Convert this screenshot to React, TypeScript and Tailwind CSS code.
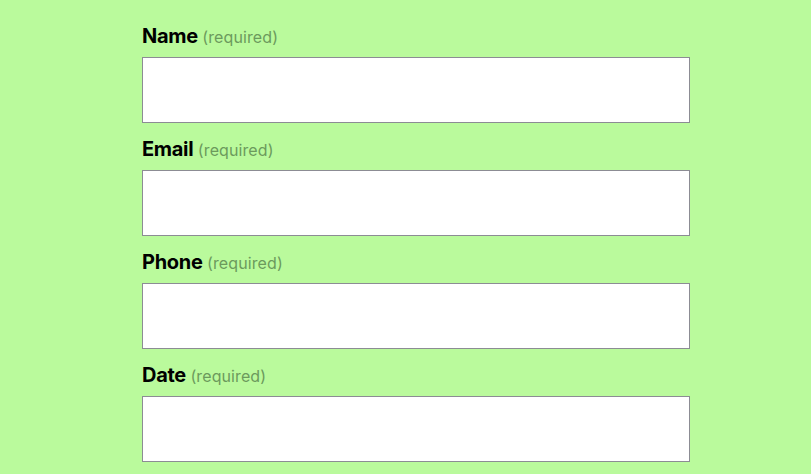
import React from 'react';

const fields = ['Name', 'Email', 'Phone', 'Date'];

const App: React.FC = () => {
  return (
    <div className="min-h-screen w-full bg-[#bafa9c] font-['Inter','Noto_Sans',sans-serif]">
      <form className="ml-[142px] w-[548px] pt-[20px] flex flex-col gap-[10px]">
        {fields.map((f) => (
          <div key={f} className="flex flex-col">
            <label className="leading-[30px] pt-[1px] mb-[5px] text-black">
              <span className="text-[20px] font-bold tracking-[-0.3px]">{f}</span>{' '}
              <span className="text-[16px] tracking-[0.1px] text-[#6c9a5c]">(required)</span>
            </label>
            <input
              type="text"
              className="h-[66px] w-full bg-white border border-[#8c8c94] outline-none"
            />
          </div>
        ))}
      </form>
    </div>
  );
};

export default App;
